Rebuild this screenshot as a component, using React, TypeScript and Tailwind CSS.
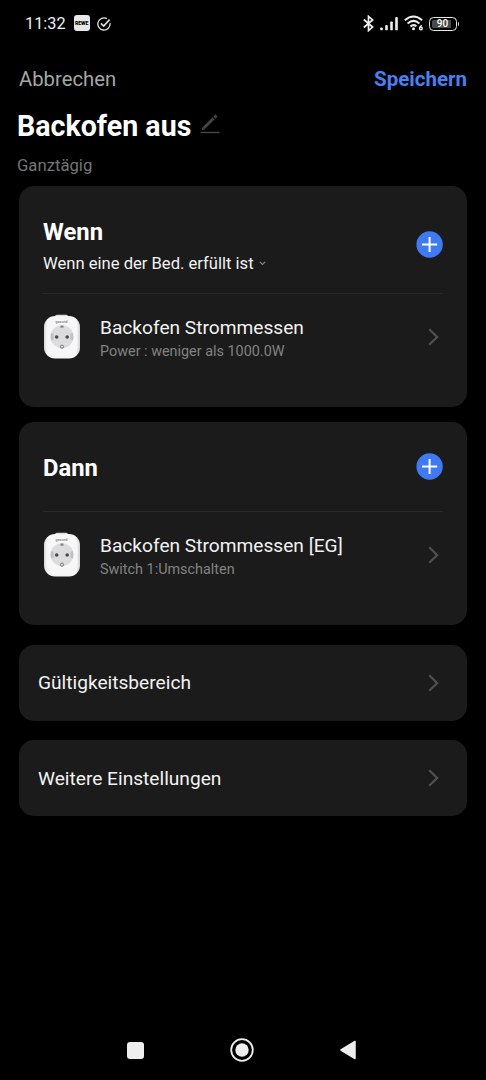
import React from "react";

type Device = {
  name: string;
  detail: string;
};

const condition: Device = {
  name: "Backofen Strommessen",
  detail: "Power : weniger als 1000.0W",
};

const action: Device = {
  name: "Backofen Strommessen [EG]",
  detail: "Switch 1:Umschalten",
};

const StatusBar = () => (
  <div className="flex h-12 shrink-0 items-center justify-between pl-[25px] pr-[27px]">
    <div className="flex items-center">
      <span className="pt-px text-[16.3px] leading-none text-[#eeeeee]">11:32</span>
      <span className="mb-px ml-2 flex size-4 items-center justify-center rounded-[3px] bg-[#e8e8e8] text-[5.2px] font-black leading-none tracking-[-0.1px] text-black">
        REWE
      </span>
      <svg className="ml-[7px] size-[14px]" viewBox="0 0 14 14" fill="none" stroke="#e0e0e0" strokeWidth="1.3">
        <path d="M9.9 1.6A6.1 6.1 0 1 0 13 6.2" />
        <path d="M4 6.4l2.6 2.7L12.6 2.6" strokeWidth="1.6" />
      </svg>
    </div>

    <div className="flex items-center">
      {/* Bluetooth */}
      <svg className="mb-0.5 h-[17px] w-[11px]" viewBox="0 0 11 17" fill="none" stroke="#eeeeee" strokeWidth="1.7">
        <path d="M0.8 4.5l8.8 7.6-4.1 3.5V1.4l4.1 3.5L0.8 12.5" />
      </svg>
      {/* Signal */}
      <svg className="mb-0.5 ml-[6px] h-[15px] w-[19px]" viewBox="0 0 19 15" fill="#eeeeee">
        <rect x="0.2" y="11.4" width="2.6" height="2.9" rx="0.9" />
        <rect x="5.2" y="9.1" width="2.6" height="5.2" rx="0.9" />
        <rect x="10.2" y="5.4" width="2.6" height="8.9" rx="0.9" />
        <rect x="15.2" y="1" width="2.6" height="13.3" rx="0.9" />
      </svg>
      {/* Wifi 6 */}
      <svg className="mb-0.5 ml-[5px] h-[16px] w-[20px]" viewBox="0 0 20 16" fill="none" stroke="#eeeeee">
        <path d="M0.9 5.2Q9.5-2.2 18.1 5.2" strokeWidth="2" />
        <path d="M3.6 8.5Q9.5 3.3 15.4 8.5" strokeWidth="2" />
        <path d="M6.4 11.5Q9.5 8.8 12.4 11.3" strokeWidth="2" />
        <circle cx="9.5" cy="13.8" r="1.5" fill="#eeeeee" stroke="none" />
        <path d="M17.6 10.2l-1.8 2.5" strokeWidth="1.4" />
        <circle cx="16.9" cy="13.4" r="1.3" strokeWidth="1.5" />
      </svg>
      {/* Battery */}
      <div className="mb-px ml-[5px] flex h-[14px] w-[28px] items-center justify-center rounded-[4.5px] border-[1.5px] border-[#e6e6e6] p-[2px]">
        <span className="flex h-[8px] w-full items-center justify-center rounded-[1.5px] bg-linear-to-r from-[#4a4a4a] from-85% to-transparent to-85% pt-px text-[10px] font-medium leading-none text-white">
          90
        </span>
      </div>
      <span className="ml-px h-1 w-[1.5px] rounded-r bg-[#d0d0d0]" />
    </div>
  </div>
);

const Plug = () => (
  <svg className="h-[46px] w-[38px] shrink-0" viewBox="0 0 38 46">
    <defs>
      <linearGradient id="body" x1="0" x2="1">
        <stop offset="0" stopColor="#d9d9db" />
        <stop offset="0.1" stopColor="#f5f5f6" />
        <stop offset="0.88" stopColor="#f5f5f6" />
        <stop offset="1" stopColor="#d2d2d4" />
      </linearGradient>
    </defs>
    <rect x="12" y="0.8" width="13" height="4" rx="1.8" fill="#dcdcde" />
    <rect x="1" y="2" width="36" height="42.5" rx="11" fill="url(#body)" />
    <rect x="3.4" y="3.2" width="31.2" height="38.6" rx="9" fill="#f7f7f8" />
    <text x="18.5" y="9.4" textAnchor="middle" fontSize="3.6" fontWeight="700" fill="#8e8e92">
      gosund
    </text>
    <circle cx="19" cy="22.7" r="11.5" fill="#dcdcde" />
    <path d="M8.3 19a11.3 11.3 0 0 0 0 7.4l2.2-.8v-5.8zM29.7 19a11.3 11.3 0 0 1 0 7.4l-2.2-.8v-5.8z" fill="#bfbfc2" />
    <path d="M17.5 11.5h3v2.2h-3z" fill="#808084" />
    <circle cx="13.7" cy="23" r="1.8" fill="#4a4a4e" />
    <circle cx="24.2" cy="23" r="1.8" fill="#4a4a4e" />
    <circle cx="19" cy="32.7" r="1.6" fill="#e0e0e0" stroke="#77777b" strokeWidth="1" />
  </svg>
);

const Chevron = () => (
  <svg className="h-[18px] w-[11px] shrink-0" viewBox="0 0 11 18" fill="none" stroke="#505050" strokeWidth="2.2">
    <path d="M1.2 1.2L9.2 9l-8 7.8" />
  </svg>
);

const AddButton = () => (
  <button className="size-[27px] shrink-0">
    <svg className="size-full" viewBox="0 0 27 27">
      <circle cx="13.6" cy="13.5" r="13.2" fill="#3f7af3" />
      <path d="M6 13.5h15.2M13.6 5.9v15.2" stroke="#ffffff" strokeWidth="2" />
    </svg>
  </button>
);

const DeviceRow = ({ name, detail }: Device) => (
  <div className="flex h-[86px] items-center pr-1">
    <Plug />
    <div className="ml-[19px] flex-1 pt-[3px]">
      <p className="text-[19.15px] leading-[25px] text-[#f2f2f2]">{name}</p>
      <p className="text-[14.4px] leading-[23px] text-[#828282]">{detail}</p>
    </div>
    <Chevron />
  </div>
);

const LinkRow = ({ label }: { label: string }) => (
  <div className="flex h-[76px] items-center justify-between rounded-[15px] bg-[#1b1b1b] pl-[19px] pr-7">
    <span className="pt-0.5 text-[19.15px] text-[#f2f2f2]">{label}</span>
    <Chevron />
  </div>
);

const App = () => {
  return (
    <div className="flex h-[1080px] w-[486px] flex-col overflow-hidden bg-black font-['Roboto',sans-serif] text-white">
      <StatusBar />

      {/* Header */}
      <div className="flex h-[62px] shrink-0 items-center justify-between px-[19px]">
        <button className="text-[20.3px] text-[#a6a6a6]">Abbrechen</button>
        <button className="text-[20.5px] font-bold text-[#4a7ff0]">Speichern</button>
      </div>

      {/* Title */}
      <div className="flex h-[31px] shrink-0 items-center pl-[17px]">
        <h1 className="pt-px text-[28.6px] font-bold leading-none">Backofen aus</h1>
        <svg className="mb-[3px] ml-[9px] h-[20px] w-[20px]" viewBox="0 0 20 20" fill="none" stroke="#454545">
          <path d="M3.6 14.3L13.7 4.3" strokeWidth="2.9" />
          <path d="M14.4 3.6l2.2-2.1" strokeWidth="2.9" />
          <path d="M1.7 16.2l.8-2.9 2.2 2.1z" fill="#454545" stroke="none" />
          <path d="M0.5 18.5H19.5" strokeWidth="1.4" />
        </svg>
      </div>
      <p className="mt-[13px] h-[23px] shrink-0 pl-[17px] text-[16.7px] leading-6 text-[#757575]">Ganztägig</p>

      <main className="mt-[9px] flex flex-col px-[19px]">
        {/* Condition */}
        <section className="h-[221px] rounded-[15px] bg-[#1b1b1b] px-6">
          <div className="flex h-[108px] items-center justify-between border-b border-[#292929] pt-[10px]">
            <div className="pt-[7px]">
              <h2 className="text-[23.8px] font-bold leading-8">Wenn</h2>
              <p className="flex items-center text-[16.6px] leading-8 text-[#f2f2f2]">
                Wenn eine der Bed. erfüllt ist
                <svg className="mb-[2px] ml-[5px] h-[5px] w-[7px]" viewBox="0 0 7 5" fill="none" stroke="#858585" strokeWidth="1.2">
                  <path d="M0.8 0.8l2.7 2.7L6.2 0.8" />
                </svg>
              </p>
            </div>
            <AddButton />
          </div>
          <DeviceRow {...condition} />
        </section>

        {/* Action */}
        <section className="mt-[15px] h-[203px] rounded-[15px] bg-[#1b1b1b] px-6">
          <div className="flex h-[90px] items-center justify-between border-b border-[#292929]">
            <h2 className="pt-0.5 text-[23.8px] font-bold leading-8">Dann</h2>
            <AddButton />
          </div>
          <DeviceRow {...action} />
        </section>

        <div className="mt-[19.5px] flex flex-col gap-[19.5px]">
          <LinkRow label="Gültigkeitsbereich" />
          <LinkRow label="Weitere Einstellungen" />
        </div>
      </main>

      {/* Navigation bar */}
      <nav className="mt-auto flex h-[60px] shrink-0 items-center pl-[127px]">
        <span className="size-[17px] rounded-[3px] bg-[#eeeeee]" />
        <svg className="ml-[86px] size-[24px]" viewBox="0 0 24 24">
          <circle cx="12" cy="12" r="10.8" fill="none" stroke="#eeeeee" strokeWidth="1.8" />
          <circle cx="12" cy="12" r="6.7" fill="#eeeeee" />
        </svg>
        <svg className="ml-[85px] h-[20px] w-[18px]" viewBox="0 0 18 20">
          <path d="M2 10L16 1.5v17z" fill="#eeeeee" stroke="#eeeeee" strokeWidth="1.5" strokeLinejoin="round" />
        </svg>
      </nav>
    </div>
  );
};

export default App;
